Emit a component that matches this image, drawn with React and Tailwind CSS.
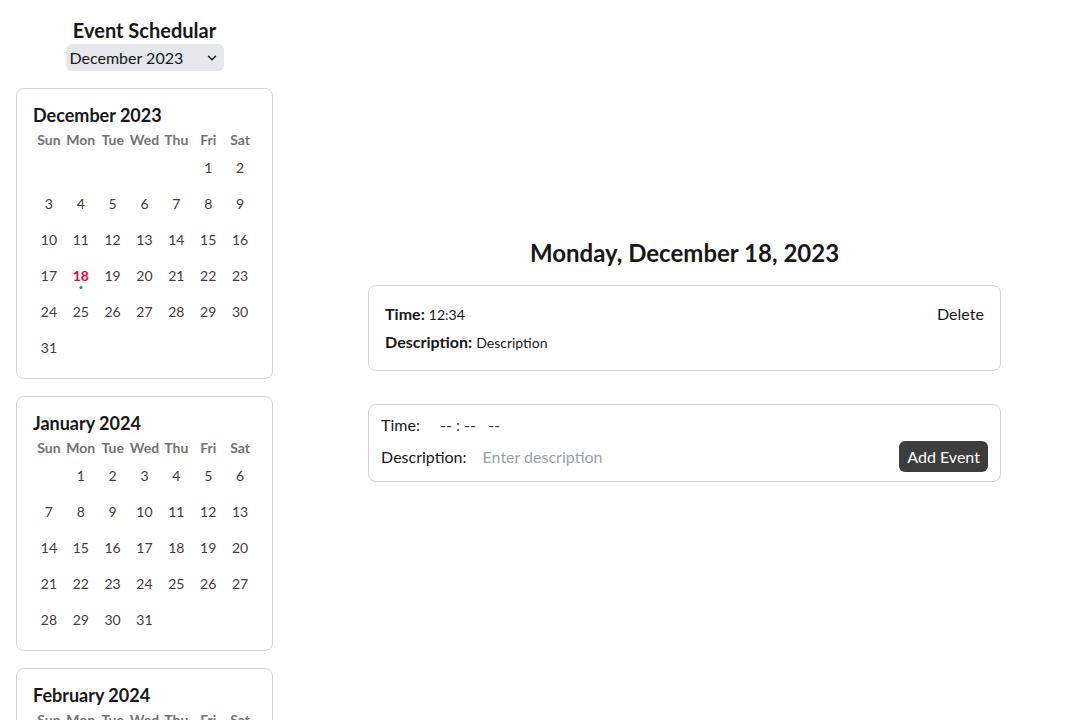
import { ChevronDown } from "lucide-react";

const DAYS = ["Sun", "Mon", "Tue", "Wed", "Thu", "Fri", "Sat"];

const MONTHS = [
  { name: "December 2023", year: 2023, month: 11 },
  { name: "January 2024", year: 2024, month: 0 },
  { name: "February 2024", year: 2024, month: 1 },
];

const MonthCard = ({ name, year, month }) => {
  const first = new Date(year, month, 1).getDay();
  const total = new Date(year, month + 1, 0).getDate();
  const cells = [...Array(first).fill(null), ...Array.from({ length: total }, (_, i) => i + 1)];
  const isDec = year === 2023 && month === 11;

  return (
    <div className="shrink-0 rounded-lg border border-neutral-300 bg-white px-4 pt-4 pb-3">
      <h2 className="text-lg font-bold leading-5 text-neutral-900">{name}</h2>
      <div className="mt-[5px] grid grid-cols-7 text-center text-sm font-bold leading-5 text-neutral-500">
        {DAYS.map((d) => (
          <div key={d}>{d}</div>
        ))}
      </div>
      <div className="grid grid-cols-7 text-center text-sm text-neutral-700">
        {cells.map((day, i) => (
          <div key={i} className="flex h-9 items-center justify-center">
            {day && (
              <span
                className={`relative leading-5 ${isDec && day === 18 ? "font-bold text-rose-600" : ""}`}
              >
                {day}
                {isDec && day === 18 && (
                  <span className="absolute left-1/2 top-full size-[3px] -translate-x-1/2 rounded-full bg-green-600" />
                )}
              </span>
            )}
          </div>
        ))}
      </div>
    </div>
  );
};

export default function App() {
  return (
    <div className="flex h-screen overflow-hidden bg-white font-['Lato',sans-serif] text-neutral-900">
      <aside className="flex w-[289px] shrink-0 flex-col px-4 pt-4">
        <h1 className="text-center text-xl font-bold leading-7">Event Schedular</h1>
        <div className="flex justify-center">
          <div className="relative flex h-[27px] w-[158px] items-center rounded-md bg-gray-200 pl-1">
            <span className="text-base">December 2023</span>
            <ChevronDown className="absolute right-[5px] size-3.5" strokeWidth={2.5} />
          </div>
        </div>
        <div className="mt-[17px] flex flex-col gap-[17px]">
          {MONTHS.map((m) => (
            <MonthCard key={m.name} {...m} />
          ))}
        </div>
      </aside>

      <main className="flex flex-1 flex-col items-center justify-center">
        <h2 className="text-2xl font-bold leading-[30px]">Monday, December 18, 2023</h2>

        <div className="mt-[17px] w-4/5 rounded-lg border border-neutral-300 px-4 py-4">
          <div className="flex items-center justify-between leading-6">
            <p>
              <span className="font-bold">Time:</span> <span className="text-sm">12:34</span>
            </p>
            <button className="text-base">Delete</button>
          </div>
          <p className="mt-1 leading-6">
            <span className="font-bold">Description:</span> <span className="text-sm">Description</span>
          </p>
        </div>

        <div className="mt-[33px] flex w-4/5 flex-col gap-1 rounded-lg border border-neutral-300 px-3 pt-2 pb-[9px]">
          <div className="flex h-6 items-center">
            <span>Time:</span>
            <span className="ml-5 text-neutral-700">-- : --&nbsp;&nbsp;&nbsp;--</span>
          </div>
          <div className="flex items-center">
            <span>Description:</span>
            <input
              type="text"
              placeholder="Enter description"
              className="ml-4 flex-1 bg-transparent outline-none placeholder:text-gray-400"
            />
            <button className="h-[31px] rounded-md bg-[#3d3d3d] px-2 text-white">Add Event</button>
          </div>
        </div>
      </main>
    </div>
  );
}
